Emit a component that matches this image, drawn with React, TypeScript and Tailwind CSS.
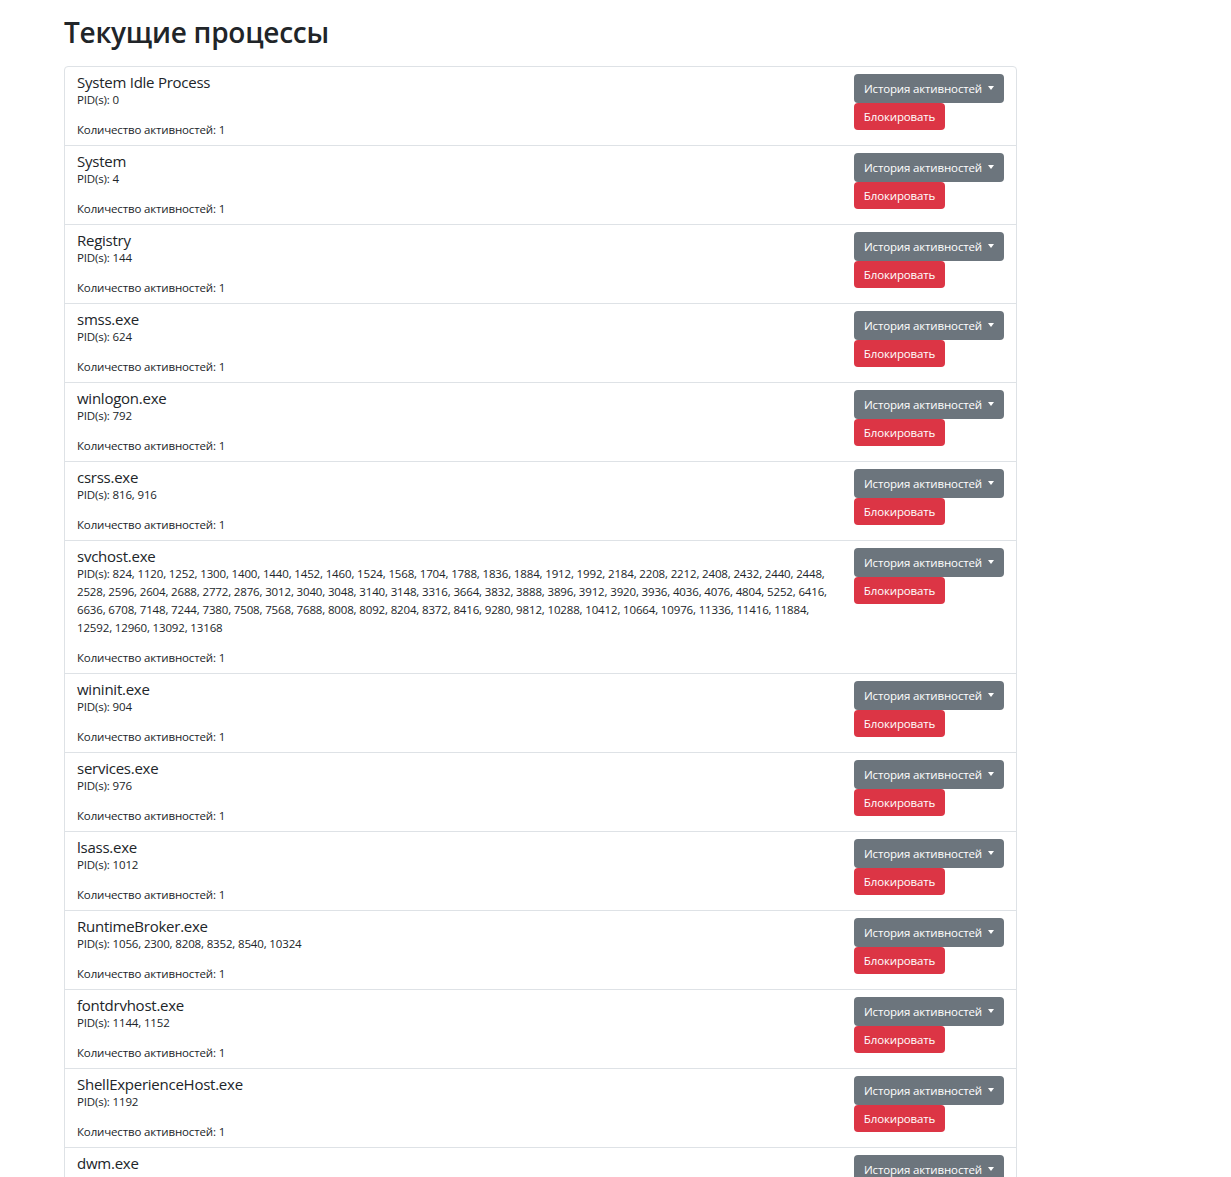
import React from 'react';

interface Proc {
  name: string;
  pids: number[];
  count: number;
}

const processes: Proc[] = [
  { name: 'System Idle Process', pids: [0], count: 1 },
  { name: 'System', pids: [4], count: 1 },
  { name: 'Registry', pids: [144], count: 1 },
  { name: 'smss.exe', pids: [624], count: 1 },
  { name: 'winlogon.exe', pids: [792], count: 1 },
  { name: 'csrss.exe', pids: [816, 916], count: 1 },
  {
    name: 'svchost.exe',
    pids: [
      824, 1120, 1252, 1300, 1400, 1440, 1452, 1460, 1524, 1568, 1704, 1788, 1836, 1884, 1912, 1992, 2184, 2208,
      2212, 2408, 2432, 2440, 2448, 2528, 2596, 2604, 2688, 2772, 2876, 3012, 3040, 3048, 3140, 3148, 3316, 3664,
      3832, 3888, 3896, 3912, 3920, 3936, 4036, 4076, 4804, 5252, 6416, 6636, 6708, 7148, 7244, 7380, 7508, 7568,
      7688, 8008, 8092, 8204, 8372, 8416, 9280, 9812, 10288, 10412, 10664, 10976, 11336, 11416, 11884, 12592,
      12960, 13092, 13168,
    ],
    count: 1,
  },
  { name: 'wininit.exe', pids: [904], count: 1 },
  { name: 'services.exe', pids: [976], count: 1 },
  { name: 'lsass.exe', pids: [1012], count: 1 },
  { name: 'RuntimeBroker.exe', pids: [1056, 2300, 8208, 8352, 8540, 10324], count: 1 },
  { name: 'fontdrvhost.exe', pids: [1144, 1152], count: 1 },
  { name: 'ShellExperienceHost.exe', pids: [1192], count: 1 },
  { name: 'dwm.exe', pids: [1236], count: 1 },
];

function ProcessRow({ proc }: { proc: Proc }) {
  return (
    <li className="flex gap-3 border-b border-[#dee2e6] last:border-b-0 pl-3 pr-3 pt-[7px] pb-[6px]">
      {/* Info side */}
      <div className="flex-1 min-w-0">
        <div className="text-[15px] leading-[16px] tracking-[-0.25px] text-[#212529] mb-[1px]">{proc.name}</div>
        <p className="text-[11.5px] leading-[18px] tracking-[-0.15px] text-[#212529] mb-3">
          PID(s): {proc.pids.join(', ')}
        </p>
        <p className="text-[11.5px] leading-[18px] tracking-[-0.15px] text-[#212529]">
          Количество активностей: {proc.count}
        </p>
      </div>

      {/* Actions */}
      <div className="w-[150px] flex flex-col items-start">
        <button className="h-[29px] w-[150px] rounded-[4px] bg-[#6c757d] text-white text-[11.5px] tracking-[-0.15px] whitespace-nowrap pl-[10px] pr-[10px] flex items-center justify-between">
          <span>История активностей</span>
          <span className="w-0 h-0 border-l-[3.5px] border-r-[3.5px] border-t-[4px] border-l-transparent border-r-transparent border-t-white mb-[2px]" />
        </button>
        <button className="h-[27px] w-[91px] rounded-[4px] bg-[#dc3545] text-white text-[11.5px] tracking-[-0.15px] whitespace-nowrap flex items-center justify-center">
          Блокировать
        </button>
      </div>
    </li>
  );
}

export default function App() {
  return (
    <div className="min-h-screen bg-white pt-[14px]" style={{ fontFamily: '"Open Sans", "Noto Sans", sans-serif' }}>
      <div className="ml-[64px] w-[953px]">
        <h1 className="text-[28px] leading-[36px] font-semibold tracking-[-0.25px] text-[#212529] mb-4">
          Текущие процессы
        </h1>
        <ul className="border border-[#dee2e6] rounded-[4px] bg-white">
          {processes.map((p) => (
            <ProcessRow key={p.name} proc={p} />
          ))}
        </ul>
      </div>
    </div>
  );
}
